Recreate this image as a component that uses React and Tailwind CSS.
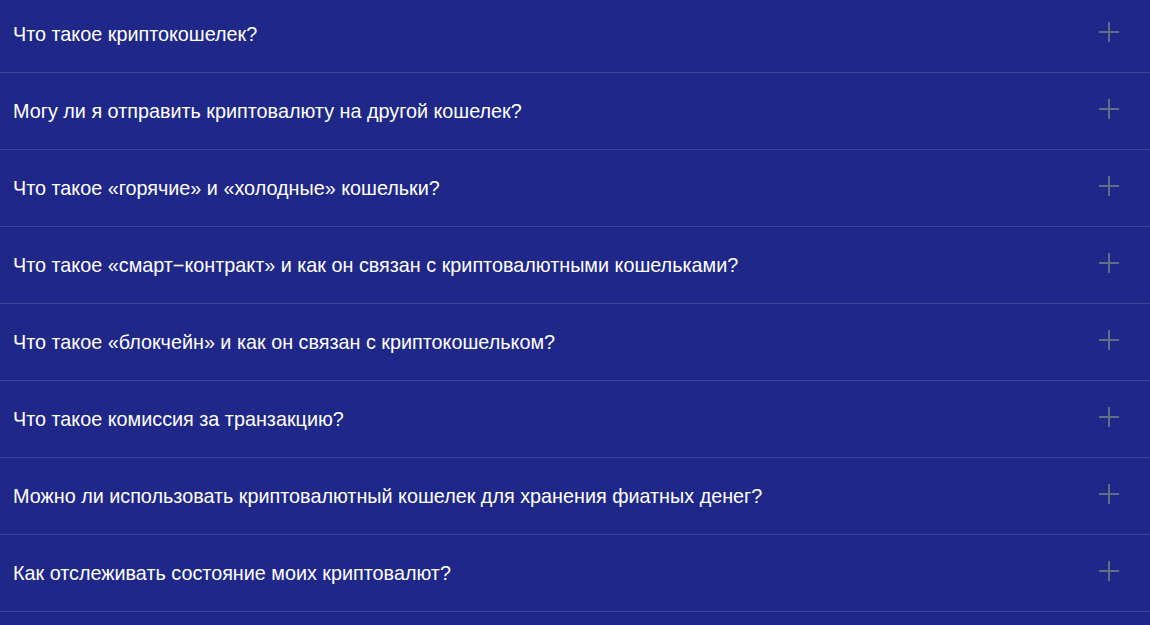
const questions = [
  'Что такое криптокошелек?',
  'Могу ли я отправить криптовалюту на другой кошелек?',
  'Что такое «горячие» и «холодные» кошельки?',
  'Что такое «смарт−контракт» и как он связан с криптовалютными кошельками?',
  'Что такое «блокчейн» и как он связан с криптокошельком?',
  'Что такое комиссия за транзакцию?',
  'Можно ли использовать криптовалютный кошелек для хранения фиатных денег?',
  'Как отслеживать состояние моих криптовалют?',
];

function PlusIcon() {
  return (
    <svg width="22" height="22" viewBox="0 0 22 22" className="shrink-0">
      <path d="M11 1v20M1 11h20" stroke="#5f6e86" strokeWidth="2" />
    </svg>
  );
}

export default function App() {
  return (
    <div className="h-[625px] overflow-hidden bg-[#1f2788] text-white font-['Liberation_Sans',Arial,sans-serif]">
      <div className="-mt-[4px] flex flex-col">
        {questions.map((q) => (
          <div
            key={q}
            className="flex h-[77px] items-center justify-between border-b border-[#3a4499] pl-[13px] pr-[30px]"
          >
            <span className="text-[19.8px] leading-none mt-[1px]">{q}</span>
            <span className="-mt-[5px]">
              <PlusIcon />
            </span>
          </div>
        ))}
      </div>
    </div>
  );
}
